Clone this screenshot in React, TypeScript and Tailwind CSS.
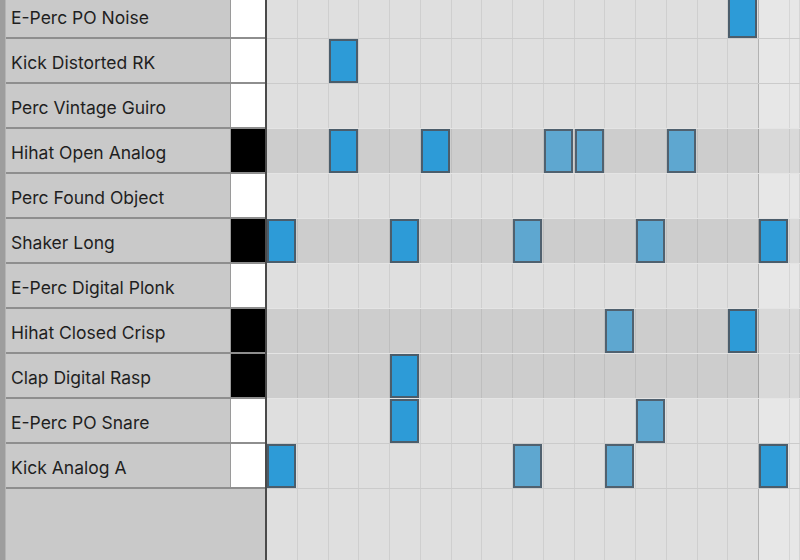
import clsx from 'clsx';

interface Track {
  name: string;
  black: boolean;
  // step index -> velocity ('hi' = full blue, 'lo' = faded blue)
  notes: Record<number, 'hi' | 'lo'>;
}

const TRACKS: Track[] = [
  { name: 'E-Perc PO Noise', black: false, notes: { 15: 'hi' } },
  { name: 'Kick Distorted RK', black: false, notes: { 2: 'hi' } },
  { name: 'Perc Vintage Guiro', black: false, notes: {} },
  { name: 'Hihat Open Analog', black: true, notes: { 2: 'hi', 5: 'hi', 9: 'lo', 10: 'lo', 13: 'lo' } },
  { name: 'Perc Found Object', black: false, notes: {} },
  { name: 'Shaker Long', black: true, notes: { 0: 'hi', 4: 'hi', 8: 'lo', 12: 'lo', 16: 'hi' } },
  { name: 'E-Perc Digital Plonk', black: false, notes: {} },
  { name: 'Hihat Closed Crisp', black: true, notes: { 11: 'lo', 15: 'hi' } },
  { name: 'Clap Digital Rasp', black: true, notes: { 4: 'hi' } },
  { name: 'E-Perc PO Snare', black: false, notes: { 4: 'hi', 12: 'lo' } },
  { name: 'Kick Analog A', black: false, notes: { 0: 'hi', 8: 'lo', 11: 'lo', 16: 'hi' } },
];

const STEPS = Array.from({ length: 18 }, (_, i) => i);

function StepCells({ notes }: { notes?: Track['notes'] }) {
  return (
    <div className="grid h-full grid-cols-[repeat(17,30.75px)_1fr]">
      {STEPS.map((s) => {
        const v = notes?.[s];
        return (
          <div
            key={s}
            className={clsx(
              'h-full border-r',
              s === 15 ? 'border-black/20' : 'border-black/[0.07]',
              s >= 16 && 'bg-white/25',
            )}
          >
            {v && (
              <div
                className={clsx(
                  'h-full w-[29px] border-2',
                  v === 'hi' ? 'border-[#4b5d6b] bg-[#2d9bd7]' : 'border-[#50616f] bg-[#5ea7d0]',
                )}
              />
            )}
          </div>
        );
      })}
    </div>
  );
}

export default function App() {
  return (
    <div
      className="flex h-[560px] w-[800px] overflow-hidden bg-[#c9c9c9] text-[17.5px] text-[#1f1f1f]"
      style={{ fontFamily: 'Inter, "Noto Sans", sans-serif' }}
    >
      <div className="w-[6px] shrink-0 border-r border-[#b4b4b4] bg-[#9d9d9d]" />

      {/* track names + key column */}
      <div className="-mt-[6px] flex w-[259px] shrink-0 flex-col">
        {TRACKS.map((t) => (
          <div key={t.name} className="flex h-[45px] shrink-0 border-b-2 border-[#8e8e8e]">
            <div className="flex w-[224px] items-center pl-[5px] pt-[6px]">{t.name}</div>
            <div className={clsx('w-[35px] border-l border-[#9a9a9a]', t.black ? 'bg-black' : 'bg-white')} />
          </div>
        ))}
        <div className="flex-1" />
      </div>

      {/* step grid */}
      <div className="-mt-[6px] flex flex-1 flex-col border-l-2 border-[#4a4a4a]">
        {TRACKS.map((t, i) => {
          const next = TRACKS[i + 1];
          const lightLine = t.black || next?.black;
          return (
            <div
              key={t.name}
              className={clsx(
                'h-[45px] shrink-0 border-b',
                t.black ? 'bg-[#cdcdcd]' : 'bg-[#dfdfdf]',
                lightLine ? 'border-[#e4e4e4]' : 'border-[#cbcbcb]',
              )}
            >
              <StepCells notes={t.notes} />
            </div>
          );
        })}
        <div className="flex-1 bg-[#dfdfdf]">
          <StepCells />
        </div>
      </div>
    </div>
  );
}
